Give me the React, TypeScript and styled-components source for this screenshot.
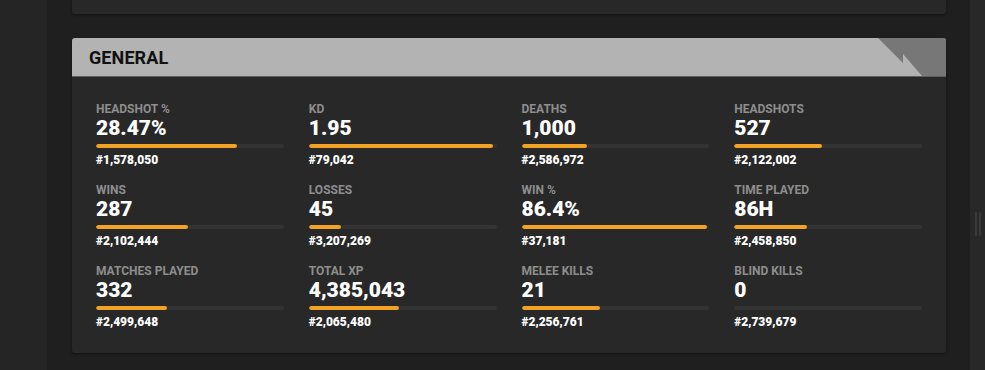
import styled, { createGlobalStyle } from 'styled-components';

const GlobalStyle = createGlobalStyle`
  html, body {
    margin: 0;
    padding: 0;
    background-color: #1f1f1f;
    font-family: Roboto, 'Liberation Sans', Arial, sans-serif;
  }
`;

const Page = styled.div`
  display: flex;
  width: 985px;
  height: 370px;
  overflow: hidden;
  background-color: #1f1f1f;
`;

const SideRail = styled.div`
  width: 47px;
  flex-shrink: 0;
  background-color: #252525;
`;

const Main = styled.div`
  flex: 1;
  display: flex;
  flex-direction: column;
  gap: 24px;
  padding: 0 24px 0 25px;
`;

const ScrollTrack = styled.div`
  width: 15px;
  flex-shrink: 0;
  background-color: #282828;
  display: flex;
  justify-content: center;
  gap: 2px;
  padding-top: 212px;
  box-sizing: border-box;
`;

const Grip = styled.div`
  width: 2px;
  height: 24px;
  background-color: #3a3a3a;
  border-radius: 1px;
`;

const PrevCard = styled.div`
  height: 14px;
  background-color: #282828;
  border-radius: 0 0 3px 3px;
  box-shadow: 0 1px 3px rgba(0, 0, 0, 0.45);
`;

const Card = styled.section`
  background-color: #282828;
  border-radius: 3px;
  box-shadow: 0 1px 3px rgba(0, 0, 0, 0.45);
  overflow: hidden;
`;

const CardHeader = styled.header`
  display: flex;
  align-items: center;
  height: 38px;
  background-color: #b3b3b3;
  border-bottom: 1px solid #5e5e5e;
  padding-left: 17px;
`;

const CardTitle = styled.h2`
  margin: 0;
  font-size: 18px;
  font-weight: 700;
  color: #111111;
  letter-spacing: 0.1px;
`;

const Corner = styled.svg`
  margin-left: auto;
  display: block;
`;

const StatGrid = styled.div`
  display: grid;
  grid-template-columns: repeat(4, 1fr);
  column-gap: 25px;
  row-gap: 16px;
  padding: 25px 24px 24px;
`;

const Stat = styled.div`
  display: flex;
  flex-direction: column;
`;

const Label = styled.div`
  font-size: 12px;
  line-height: 14px;
  font-weight: 700;
  color: #8e8e8e;
  text-transform: uppercase;
`;

const Value = styled.div`
  font-size: 21px;
  line-height: 24px;
  font-weight: 900;
  color: #ffffff;
`;

const Track = styled.div`
  height: 4px;
  margin-top: 4px;
  border-radius: 2px;
  background-color: #333333;
  overflow: hidden;
`;

const Fill = styled.div`
  height: 100%;
  border-radius: 2px;
  background-color: #f2a224;
`;

const Rank = styled.div`
  margin-top: 5px;
  font-size: 12px;
  line-height: 14px;
  font-weight: 900;
  color: #ffffff;
`;

const stats = [
  { label: 'Headshot %', value: '28.47%', rank: '#1,578,050', pct: 75 },
  { label: 'KD', value: '1.95', rank: '#79,042', pct: 98 },
  { label: 'Deaths', value: '1,000', rank: '#2,586,972', pct: 35 },
  { label: 'Headshots', value: '527', rank: '#2,122,002', pct: 47 },
  { label: 'Wins', value: '287', rank: '#2,102,444', pct: 49 },
  { label: 'Losses', value: '45', rank: '#3,207,269', pct: 17 },
  { label: 'Win %', value: '86.4%', rank: '#37,181', pct: 99 },
  { label: 'Time Played', value: '86H', rank: '#2,458,850', pct: 39 },
  { label: 'Matches Played', value: '332', rank: '#2,499,648', pct: 38 },
  { label: 'Total XP', value: '4,385,043', rank: '#2,065,480', pct: 48 },
  { label: 'Melee Kills', value: '21', rank: '#2,256,761', pct: 42 },
  { label: 'Blind Kills', value: '0', rank: '#2,739,679', pct: 0 }
];

const App = () => {
  return (
    <>
      <GlobalStyle />
      <Page>
        <SideRail />
        <Main>
          <PrevCard />
          <Card>
            <CardHeader>
              <CardTitle>GENERAL</CardTitle>
              <Corner width="68" height="38" viewBox="0 0 68 38">
                <polygon
                  points="0,0 68,0 68,38 44,38 25,16 25,25"
                  fill="#777777"
                />
              </Corner>
            </CardHeader>
            <StatGrid>
              {stats.map((s) => (
                <Stat key={s.label}>
                  <Label>{s.label}</Label>
                  <Value>{s.value}</Value>
                  <Track>
                    <Fill style={{ width: `${s.pct}%` }} />
                  </Track>
                  <Rank>{s.rank}</Rank>
                </Stat>
              ))}
            </StatGrid>
          </Card>
        </Main>
        <ScrollTrack>
          <Grip />
          <Grip />
        </ScrollTrack>
      </Page>
    </>
  );
};

export default App;
